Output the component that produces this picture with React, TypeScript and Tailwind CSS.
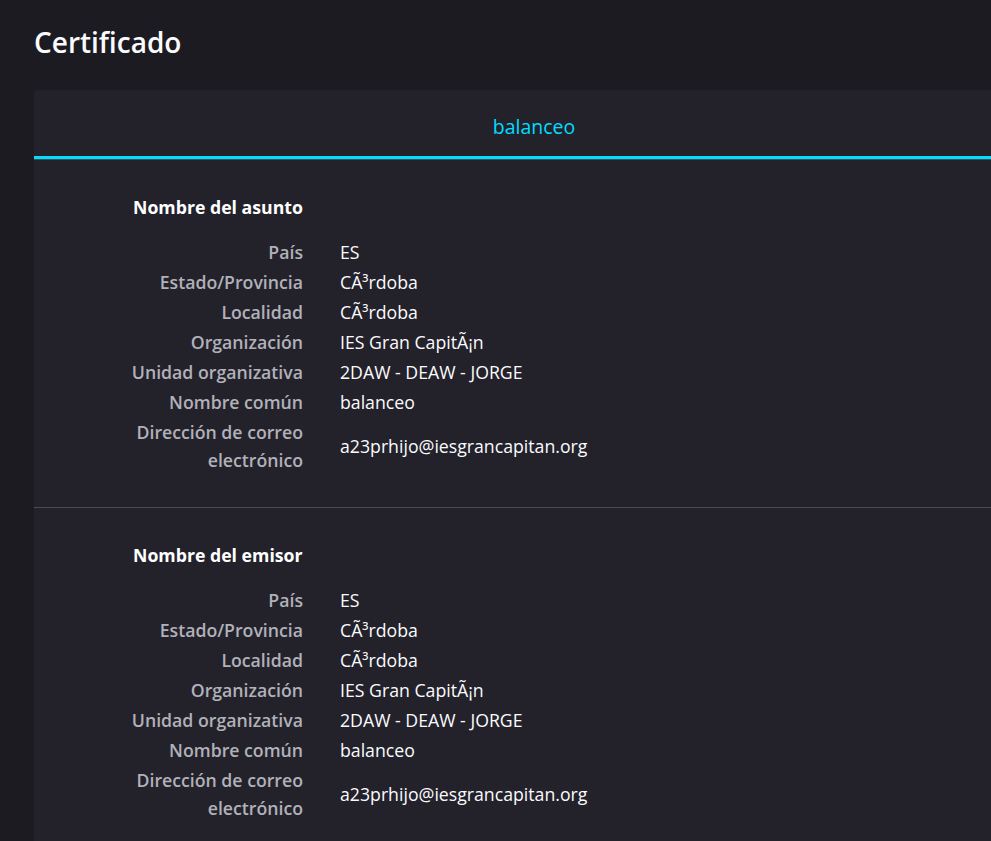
import React from "react";

const rows: [string, string][] = [
	["País", "ES"],
	["Estado/Provincia", "CÃ³rdoba"],
	["Localidad", "CÃ³rdoba"],
	["Organización", "IES Gran CapitÃ¡n"],
	["Unidad organizativa", "2DAW - DEAW - JORGE"],
	["Nombre común", "balanceo"],
	["Dirección de correo electrónico", "a23prhijo@iesgrancapitan.org"],
];

function Section({ title, last }: { title: string; last?: boolean }) {
	return (
		<section
			className={
				"pt-[33px] pb-[33px] " + (last ? "" : "border-b border-[#4b4a53]")
			}
		>
			<h2 className="pl-[99px] text-[17.7px] leading-[28px] font-bold text-white">
				{title}
			</h2>
			<div className="mt-[17px] flex flex-col gap-[2px] pl-[91px]">
				{rows.map(([label, value]) => (
					<div key={label} className="flex items-center text-[17.7px] leading-[28px]">
						<div className="w-[178px] shrink-0 text-right font-semibold text-[#b1b1b9]">
							{label}
						</div>
						<div className="ml-[37px] text-[#fbfbfe]">{value}</div>
					</div>
				))}
			</div>
		</section>
	);
}

export default function App() {
	return (
		<div
			className="h-[841px] w-full overflow-hidden bg-[#1c1b22]"
			style={{ fontFamily: '"Open Sans", "Noto Sans", sans-serif' }}
		>
			<h1 className="pl-[34px] pt-[23px] text-[28px] leading-[38px] font-semibold text-[#fbfbfe]">
				Certificado
			</h1>
			<div className="ml-[34px] mt-[29px] w-[1000px] rounded-t-[4px] bg-[#23222b]">
				<div className="border-b border-[#4b4a53]">
					<div className="flex h-[69px] items-center justify-center border-b-[3px] border-[#00ddff] pt-[7px] text-[19.5px] text-[#00ddff]">
						balanceo
					</div>
				</div>
				<Section title="Nombre del asunto" />
				<Section title="Nombre del emisor" last />
			</div>
		</div>
	);
}
